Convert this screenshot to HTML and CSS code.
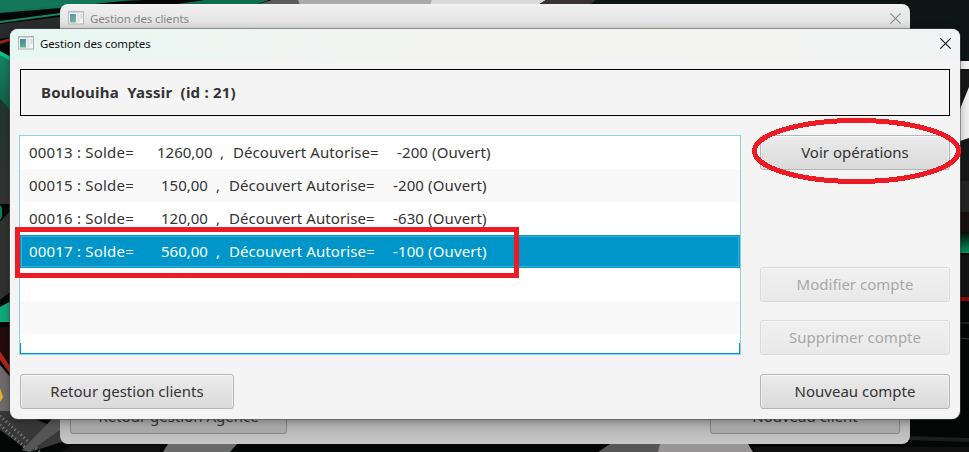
FILE: index.html
```html
<!DOCTYPE html>
<html lang="fr">
<head>
<meta charset="utf-8">
<title>Gestion des comptes</title>
<link rel="stylesheet" href="styles.css">
</head>
<body>
<main class="desktop">
  <svg class="wallpaper" viewBox="0 0 969 452" aria-hidden="true">
    <defs>
      <linearGradient id="leaf" x1="0" y1="0" x2="0" y2="1"><stop offset="0" stop-color="#16896a"/><stop offset="1" stop-color="#105a42"/></linearGradient>
      <linearGradient id="glow" x1="0" y1="0" x2="0" y2="1"><stop offset="0" stop-color="#02100c"/><stop offset="1" stop-color="#07945f"/></linearGradient>
      <linearGradient id="slate" x1="0" y1="0" x2="0" y2="1"><stop offset="0" stop-color="#22362e"/><stop offset="1" stop-color="#323333"/></linearGradient>
    </defs>
    <rect width="969" height="452" fill="#050606"/>
    <path d="M0 0H130L60 8L0 13Z" fill="#107454"/>
    <path d="M0 12L60 5L145 0H0Z" fill="#16785a" opacity=".6"/>
    <path d="M0 24L60 17V29L10 37L0 39Z" fill="#292c2c"/>
    <path d="M0 21L60 13V15L0 23Z" fill="#178664"/>
    <path d="M170 5L205 0H269L255 5Z" fill="#0d6d4c"/>
    <path d="M255 5L272 0H300V5Z" fill="#5b5b5b"/>
    <path d="M298 0H432V5H300Z" fill="#aaa"/>
    <path d="M432 0H546L538 5H430Z" fill="#dadada"/>
    <path d="M546 0H596L590 5H538Z" fill="#393333"/>
    <path d="M596 0H969V61H900V5H590Z" fill="#0e1515"/>
    <path d="M0 41L10 38V41L0 44Z" fill="#9c2118"/>
    <path d="M0 52L11 57V112L0 99Z" fill="url(#leaf)"/>
    <path d="M0 51L11 57V61L0 55Z" fill="#06c98e"/>
    <path d="M0 99L11 112V204H0Z" fill="url(#slate)"/>
    <path d="M0 205L2 208V217L0 220Z" fill="#087d60"/>
    <path d="M0 222L11 210V291L0 300Z" fill="#303131"/>
    <path d="M0 307L11 301V322L0 322Z" fill="#10a97c"/>
    <path d="M0 327H11V370L0 350Z" fill="#220b0b"/>
    <path d="M0 351L11 368V375L0 360Z" fill="#b3261e"/>
    <path d="M0 365L11 378V426L0 412Z" fill="#706c6c"/>
    <path d="M0 388L3 397L0 402Z" fill="#f0b01d"/>
    <path d="M0 411L15 411L62 430V442L30 452L0 430Z" fill="#383838"/>
    <path d="M0 425L30 452M0 416L40 452" stroke="#858585" stroke-width="3" stroke-dasharray="1 3"/>
    <path d="M53 418H60V430L29 452L22 450Z" fill="#555"/>
    <path d="M168 444H237L230 452H163Z" fill="#6b6a6a"/>
    <path d="M60 452L73 445H160V452Z" fill="#111"/>
    <path d="M610 444H665V452H598Z" fill="#555"/>
    <path d="M660 444H748L753 452H658Z" fill="#969494"/>
    <path d="M753 447H969V452H755Z" fill="#101010"/>
    <rect x="960" y="61" width="9" height="8" fill="#f3f3f3"/>
    <rect x="959" y="69" width="10" height="112" fill="#171717"/>
    <path d="M960 109L969 87V138L960 141Z" fill="#efefef"/>
    <rect x="959" y="181" width="10" height="31" fill="#242424"/>
    <rect x="959" y="212" width="10" height="22" fill="#180f11"/>
    <rect x="959" y="232" width="10" height="21" fill="url(#glow)"/>
    <rect x="959" y="255" width="10" height="41" fill="#131313"/>
    <rect x="959" y="297" width="10" height="4" fill="#8b0a0d"/>
    <path d="M959 323H969M959 338L969 339" stroke="#393939"/>
    <path d="M910 436L969 438V442L908 440Z" fill="#1d1d1d"/>
  </svg>

  <section class="window clients">
    <header class="titlebar">
      <svg class="app-icon" viewBox="0 0 16 14"><use href="#app"/></svg>
      <span class="t-clients">Gestion des clients</span>
      <svg class="close" viewBox="0 0 10 10"><path d="M.3.3l9.4 9.4M9.7.3L.3 9.7"/></svg>
    </header>
    <footer class="clients-actions">
      <span class="button agence"><span>Retour gestion Agence</span></span>
      <span class="button client"><span>Nouveau client</span></span>
    </footer>
  </section>

  <section class="window comptes">
    <header class="titlebar">
      <svg class="app-icon" viewBox="0 0 16 14">
        <defs>
          <linearGradient id="blue" x1="0" y1="0" x2=".5" y2="1"><stop offset="0" stop-color="#3e7eae"/><stop offset="1" stop-color="#61af85"/></linearGradient>
          <g id="app"><rect x=".5" y=".5" width="15" height="12.5" fill="#f7f7f7" stroke="#aab1b7"/><path d="M1 1.5H15" stroke="#d3d6da"/><rect x="2" y="3" width="6" height="8.5" fill="url(#blue)"/><rect x="9" y="3" width="2.5" height="8.5" fill="#e0e4ed"/><rect x="12.5" y="3" width="2" height="5" fill="#cdd8e5"/></g>
        </defs>
        <use href="#app"/>
      </svg>
      <span class="t-comptes">Gestion des comptes</span>
      <svg class="close" viewBox="0 0 10 10"><path d="M.3.3l9.4 9.4M9.7.3L.3 9.7"/></svg>
    </header>
    <div class="content">
      <h1 class="owner">Boulouiha&nbsp; Yassir&nbsp; (id : 21)</h1>
      <div class="middle">
        <ul class="accounts">
          <li class="wide"><span class="id">00013 : Solde=</span><span class="sum">1260,00</span><span class="comma">,</span><span class="limit">Découvert Autorise=</span><span class="state">-200 (Ouvert)</span></li>
          <li><span class="id">00015 : Solde=</span><span class="sum">150,00</span><span class="comma">,</span><span class="limit">Découvert Autorise=</span><span class="state">-200 (Ouvert)</span></li>
          <li><span class="id">00016 : Solde=</span><span class="sum">120,00</span><span class="comma">,</span><span class="limit">Découvert Autorise=</span><span class="state">-630 (Ouvert)</span></li>
          <li class="selected"><span class="id">00017 : Solde=</span><span class="sum">560,00</span><span class="comma">,</span><span class="limit">Découvert Autorise=</span><span class="state">-100 (Ouvert)</span></li>
          <li></li><li></li><li class="last"></li>
        </ul>
        <div class="side">
          <button class="button view">Voir opérations</button>
          <button class="button" disabled>Modifier compte</button>
          <button class="button" disabled>Supprimer compte</button>
        </div>
      </div>
      <footer class="actions">
        <button class="button back">Retour gestion clients</button>
        <button class="button new">Nouveau compte</button>
      </footer>
    </div>
  </section>

  <svg class="marks" viewBox="0 0 969 452" shape-rendering="crispEdges" aria-hidden="true">
    <rect x="17.5" y="229.5" width="499" height="46"/>
    <ellipse cx="856.5" cy="151" rx="102" ry="30.5"/>
  </svg>
</main>
</body>
</html>
```
FILE: styles.css
```css
* { box-sizing: border-box; }
body { margin: 0; font-family: "Noto Sans", sans-serif; font-size: 15px; color: #333; }
.desktop { position: relative; width: 969px; height: 452px; overflow: hidden; }
.wallpaper, .marks { position: absolute; inset: 0; width: 969px; height: 452px; }
.marks { fill: none; stroke: #ed1c24; stroke-width: 5; pointer-events: none; }
.window { position: absolute; display: flex; flex-direction: column; border-radius: 8px; overflow: hidden; }
.clients { left: 60px; top: 4px; width: 850px; height: 440px; justify-content: space-between; background: linear-gradient(#f1f1f1, #dedede 25px, #aaa 414px, #c8c8c8); }
.comptes { left: 10px; top: 29px; width: 950px; height: 390px; background: #f4f4f4; box-shadow: 0 0 0 1px rgba(80, 80, 80, .5), 0 2px 9px rgba(0, 0, 0, .35); }
.titlebar { display: flex; align-items: center; flex: none; height: 30px; padding: 0 9.5px 2px 8px; font-size: 11.5px; color: #111; }
.comptes .titlebar { background: linear-gradient(90deg, #e6f7f1, #f2f4f2 35%, #f3f3f0 68%, #f1f4f4); }
.clients .titlebar { color: #858585; }
.app-icon { width: 16px; height: 14px; margin-right: 6px; }
.clients .app-icon { opacity: .85; }
.close { width: 11px; height: 11px; margin-left: auto; fill: none; stroke: #111; stroke-width: 1; }
.clients .close { stroke: #888; }
.t-clients, .t-comptes { letter-spacing: -.13px; }
.content { display: flex; flex-direction: column; padding: 10px 10px 0; }
.owner { display: flex; align-items: center; height: 47px; margin: 0 0 19px; padding: 0 20px 2px; border: 1px solid #000; font-size: 15px; font-weight: 700; letter-spacing: .22px; }
.middle { display: flex; gap: 19px; }
.accounts { width: 722px; height: 220px; margin: 0 0 0 -1px; padding: 0; border: 1px solid #8fd2e6; list-style: none; background: #fff; overflow: hidden; }
.accounts li { display: flex; align-items: center; height: 33px; padding: 0 0 2px 9px; white-space: pre; }
.accounts li:nth-child(even) { background: #f9f9f9; }
.accounts li.selected { background: #0096c9; color: #fff; box-shadow: inset 0 0 0 1px #0096c9, inset 0 0 0 2px #3aaed6; }
.accounts .last { height: 20px; padding: 0; background: linear-gradient(#0096c9, #0096c9) left bottom / 1px 10px no-repeat, linear-gradient(#0096c9, #0096c9) right bottom / 1px 10px no-repeat, #fff; border-bottom: 1px solid #0096c9; }
.id { width: 132px; letter-spacing: .2px; }
.wide .id { width: 128px; }
.sum { width: 55px; }
.wide .sum { width: 63px; }
.comma { width: 13px; }
.limit { width: 164px; letter-spacing: .08px; }
.state { letter-spacing: .12px; }
.side { display: flex; flex-direction: column; width: 190px; gap: 18px; }
.button { display: flex; align-items: center; justify-content: center; height: 35px; margin: 0; padding: 0 0 2px; border: 1px solid #b5b5b5; border-radius: 3px; background: linear-gradient(#ebebeb, #dadada); box-shadow: inset 0 1px #fafafa, inset 1px 0 #eee, inset -1px 0 #eee; font: inherit; color: #333; }
.button:disabled { opacity: .4; }
.view { margin-bottom: 79px; }
.actions { display: flex; justify-content: space-between; margin-top: 19px; }
.back { width: 214px; }
.new { width: 190px; }
.clients-actions { display: flex; justify-content: space-between; padding: 0 10px 10px; }
.clients .button { border-color: #858585; background: linear-gradient(#b5b5b5, #a8a8a8); box-shadow: none; }
.agence { width: 217px; }
.client { width: 190px; }
```
